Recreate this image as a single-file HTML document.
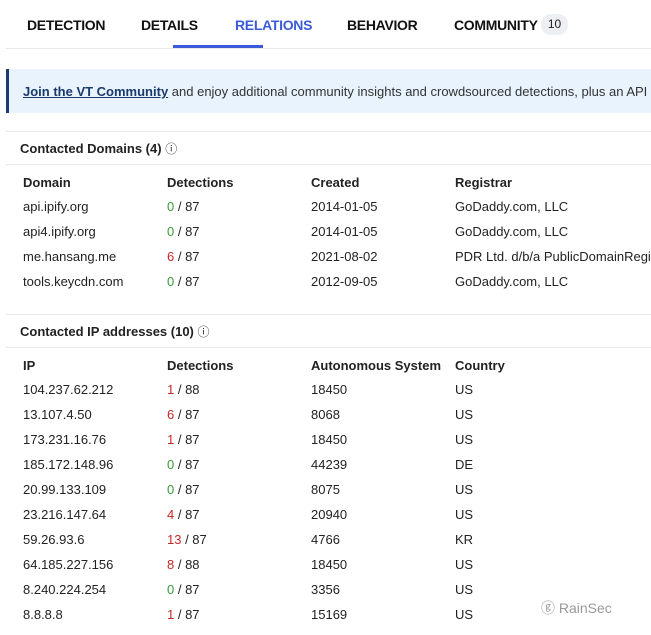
<!DOCTYPE html>
<html><head><style>
body{margin:0;width:651px;height:635px;background:#fff;font-family:"Liberation Sans",sans-serif;color:#222;position:relative;overflow:hidden}
.a{position:absolute;white-space:nowrap}
.tab{font-size:14px;top:17px;color:#111;font-weight:bold;letter-spacing:-0.3px}
.hl{position:absolute;left:6px;right:0;height:1px;background:#e6e8ee}
.t{font-size:13px}
.h{font-size:13px;font-weight:bold;color:#222}
.g{color:#3a9a3a}.r{color:#c62828}
</style></head><body>
<div class="a tab" style="left:27px">DETECTION</div>
<div class="a tab" style="left:141px">DETAILS</div>
<div class="a tab" style="left:235px;color:#3b5bdb">RELATIONS</div>
<div class="a tab" style="left:347px">BEHAVIOR</div>
<div class="a tab" style="left:454px">COMMUNITY</div>
<div class="a" style="left:541px;top:14px;width:27px;height:21px;border-radius:10px;background:#eceff3;font-size:12px;text-align:center;line-height:21px">10</div>
<div class="hl" style="top:48px"></div>
<div class="a" style="left:173px;top:45px;width:90px;height:3px;background:#3b5bdb"></div>
<div class="a" style="left:6px;top:69px;width:645px;height:44px;background:#e8f3fd;border-left:3px solid #1e3a6e;box-sizing:border-box"></div>
<div class="a t" style="left:23px;top:84px;color:#333"><u style="color:#1a3a6e;font-weight:bold">Join the VT Community</u> and enjoy additional community insights and crowdsourced detections, plus an API</div>
<div class="hl" style="top:131px"></div>
<div class="a t" style="left:20px;top:140px;font-weight:bold">Contacted Domains (4) <span style="font-weight:normal;font-size:12px">ⓘ</span></div>
<div class="hl" style="top:164px"></div>
<div class="a h" style="left:23px;top:175px">Domain</div><div class="a h" style="left:167px;top:175px">Detections</div><div class="a h" style="left:311px;top:175px">Created</div><div class="a h" style="left:455px;top:175px">Registrar</div>
<div class="a t" style="left:23px;top:199px">api.ipify.org</div><div class="a t" style="left:167px;top:199px"><span class="g">0</span> / 87</div><div class="a t" style="left:311px;top:199px">2014-01-05</div><div class="a t" style="left:455px;top:199px">GoDaddy.com, LLC</div>
<div class="a t" style="left:23px;top:224px">api4.ipify.org</div><div class="a t" style="left:167px;top:224px"><span class="g">0</span> / 87</div><div class="a t" style="left:311px;top:224px">2014-01-05</div><div class="a t" style="left:455px;top:224px">GoDaddy.com, LLC</div>
<div class="a t" style="left:23px;top:249px">me.hansang.me</div><div class="a t" style="left:167px;top:249px"><span class="r">6</span> / 87</div><div class="a t" style="left:311px;top:249px">2021-08-02</div><div class="a t" style="left:455px;top:249px">PDR Ltd. d/b/a PublicDomainRegi</div>
<div class="a t" style="left:23px;top:274px">tools.keycdn.com</div><div class="a t" style="left:167px;top:274px"><span class="g">0</span> / 87</div><div class="a t" style="left:311px;top:274px">2012-09-05</div><div class="a t" style="left:455px;top:274px">GoDaddy.com, LLC</div>
<div class="hl" style="top:314px"></div>
<div class="a t" style="left:20px;top:323px;font-weight:bold">Contacted IP addresses (10) <span style="font-weight:normal;font-size:12px">ⓘ</span></div>
<div class="hl" style="top:347px"></div>
<div class="a h" style="left:23px;top:358px">IP</div><div class="a h" style="left:167px;top:358px">Detections</div><div class="a h" style="left:311px;top:358px">Autonomous System</div><div class="a h" style="left:455px;top:358px">Country</div>
<div class="a t" style="left:23px;top:377px;line-height:25px">104.237.62.212<br>13.107.4.50<br>173.231.16.76<br>185.172.148.96<br>20.99.133.109<br>23.216.147.64<br>59.26.93.6<br>64.185.227.156<br>8.240.224.254<br>8.8.8.8</div>
<div class="a t" style="left:167px;top:377px;line-height:25px"><span class="r">1</span> / 88<br><span class="r">6</span> / 87<br><span class="r">1</span> / 87<br><span class="g">0</span> / 87<br><span class="g">0</span> / 87<br><span class="r">4</span> / 87<br><span class="r">13</span> / 87<br><span class="r">8</span> / 88<br><span class="g">0</span> / 87<br><span class="r">1</span> / 87</div>
<div class="a t" style="left:311px;top:377px;line-height:25px">18450<br>8068<br>18450<br>44239<br>8075<br>20940<br>4766<br>18450<br>3356<br>15169</div>
<div class="a t" style="left:455px;top:377px;line-height:25px">US<br>US<br>US<br>DE<br>US<br>US<br>KR<br>US<br>US<br>US</div>
<div class="a" style="left:541px;top:598px;font-size:14px;color:#999">ⓖ RainSec</div>
</body></html>
